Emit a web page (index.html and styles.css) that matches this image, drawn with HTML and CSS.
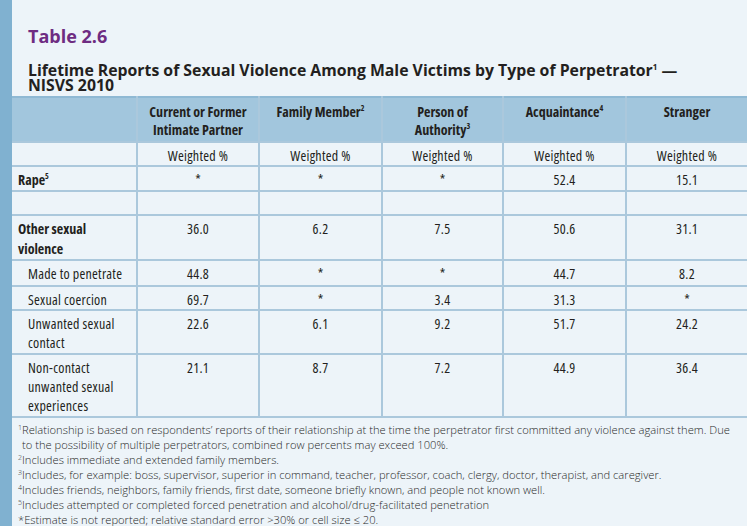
FILE: index.html
```html
<!DOCTYPE html>
<html lang="en">
<head>
<meta charset="utf-8">
<title>Table 2.6</title>
<link rel="stylesheet" href="styles.css">
</head>
<body>
<div class="page">
  <div class="bar"></div>
  <div class="main">
    <header class="titles">
      <h1 class="tnum">Table 2.6</h1>
      <h2 class="ttl">Lifetime Reports of Sexual Violence Among Male Victims by Type of Perpetrator<sup>1</sup> —<br>NISVS 2010</h2>
    </header>
    <table class="data">
      <colgroup>
        <col class="c-label">
        <col class="c-a">
        <col class="c-b">
        <col class="c-c">
        <col class="c-d">
        <col class="c-e">
      </colgroup>
      <thead>
        <tr class="r-head">
          <th></th>
          <th>Current or Former<br>Intimate Partner</th>
          <th>Family Member<sup>2</sup></th>
          <th>Person of<br>Authority<sup>3</sup></th>
          <th>Acquaintance<sup>4</sup></th>
          <th>Stranger</th>
        </tr>
      </thead>
      <tbody>
        <tr class="r-24">
          <td></td><td>Weighted %</td><td>Weighted %</td><td>Weighted %</td><td>Weighted %</td><td>Weighted %</td>
        </tr>
        <tr class="r-25">
          <td class="lbl b">Rape<sup>5</sup></td><td>*</td><td>*</td><td>*</td><td>52.4</td><td>15.1</td>
        </tr>
        <tr class="r-24">
          <td></td><td></td><td></td><td></td><td></td><td></td>
        </tr>
        <tr class="r-45 tall">
          <td class="lbl b">Other sexual<br>violence</td><td>36.0</td><td>6.2</td><td>7.5</td><td>50.6</td><td>31.1</td>
        </tr>
        <tr class="r-26">
          <td class="lbl sub">Made to penetrate</td><td>44.8</td><td>*</td><td>*</td><td>44.7</td><td>8.2</td>
        </tr>
        <tr class="r-24">
          <td class="lbl sub">Sexual coercion</td><td>69.7</td><td>*</td><td>3.4</td><td>31.3</td><td>*</td>
        </tr>
        <tr class="r-44">
          <td class="lbl sub">Unwanted sexual<br>contact</td><td>22.6</td><td>6.1</td><td>9.2</td><td>51.7</td><td>24.2</td>
        </tr>
        <tr class="r-63">
          <td class="lbl sub">Non-contact<br>unwanted sexual<br>experiences</td><td>21.1</td><td>8.7</td><td>7.2</td><td>44.9</td><td>36.4</td>
        </tr>
      </tbody>
    </table>
    <div class="notes">
      <p class="note"><sup>1</sup>Relationship is based on respondents’ reports of their relationship at the time the perpetrator first committed any violence against them. Due<br><span class="cont">to the possibility of multiple perpetrators, combined row percents may exceed 100%.</span></p>
      <p class="note"><sup>2</sup>Includes immediate and extended family members.</p>
      <p class="note"><sup>3</sup>Includes, for example: boss, supervisor, superior in command, teacher, professor, coach, clergy, doctor, therapist, and caregiver.</p>
      <p class="note"><sup>4</sup>Includes friends, neighbors, family friends, first date, someone briefly known, and people not known well.</p>
      <p class="note"><sup>5</sup>Includes attempted or completed forced penetration and alcohol/drug-facilitated penetration</p>
      <p class="note">*Estimate is not reported; relative standard error &gt;30% or cell size ≤ 20.</p>
    </div>
  </div>
</div>
</body>
</html>
```

FILE: styles.css
```css
html, body {
  margin: 0;
  padding: 0;
  background: #edf4f9;
}

.page {
  display: flex;
  width: 747px;
  height: 526px;
  overflow: hidden;
  background: #edf4f9;
}

.bar {
  flex: 0 0 12px;
  background: #80b1d0;
}

.main {
  flex: 1 1 auto;
  min-width: 0;
  display: flex;
  flex-direction: column;
}

.titles {
  padding: 25px 0 0 16px;
  height: 96px;
  box-sizing: border-box;
  flex: 0 0 auto;
}

.tnum {
  margin: 0;
  font-family: "Open Sans", "Noto Sans", sans-serif;
  font-weight: 700;
  font-size: 18px;
  line-height: 22px;
  color: #6e2c82;
}

.ttl {
  margin: 15.5px 0 0;
  font-family: "Open Sans", "Noto Sans", sans-serif;
  font-weight: 700;
  font-size: 15.8px;
  line-height: 15.5px;
  color: #231f20;
  white-space: nowrap;
}

.ttl sup {
  font-size: 8px;
  line-height: 0;
  vertical-align: 6px;
}

.data {
  border-collapse: collapse;
  table-layout: fixed;
  width: 735px;
  font-family: "Open Sans", "Roboto Condensed", sans-serif;
  font-stretch: 75%;
  color: #231f20;
}

.c-label { width: 125px; }
.c-a { width: 122px; }
.c-b { width: 123px; }
.c-c { width: 121px; }
.c-d { width: 123px; }
.c-e { width: 121px; }

.data th,
.data td {
  border: 2px solid #abc8dc;
  padding: 3px 4px 0;
  vertical-align: top;
  text-align: center;
  font-size: 14px;
  line-height: 19px;
  font-weight: 400;
  letter-spacing: 0.25px;
  white-space: nowrap;
}

.data tr > :first-child { border-left: none; }
.data tr > :last-child { border-right: none; }

.data thead th {
  background: #a2c6dd;
  border-top: 2px solid #8fb9d4;
  font-weight: 700;
  line-height: 18px;
  padding-top: 5px;
  letter-spacing: 0;
}

.data sup {
  font-size: 8px;
  line-height: 0;
  vertical-align: 6px;
}

.r-head { height: 45px; }
.r-24 { height: 24px; }
.r-25 { height: 25px; }
.r-26 { height: 26px; }
.r-44 { height: 44px; }
.r-45 { height: 45px; }
.r-63 { height: 63px; }

.data tr.tall td {
  line-height: 20px;
}

.data td.lbl {
  text-align: left;
  padding-left: 6px;
}

.data td.b { font-weight: 700; letter-spacing: 0; }

.data td.sub { padding-left: 16px; padding-right: 4px; }

.notes {
  padding: 4px 0 0 6px;
}

.note {
  margin: 0;
  font-family: "Open Sans", "Noto Sans", sans-serif;
  font-weight: 300;
  font-size: 11.2px;
  line-height: 15px;
  color: #2a2a2a;
  white-space: nowrap;
}

.note .cont {
  padding-left: 4px;
}

.note sup {
  font-size: 7px;
  line-height: 0;
  vertical-align: 4px;
}
```
